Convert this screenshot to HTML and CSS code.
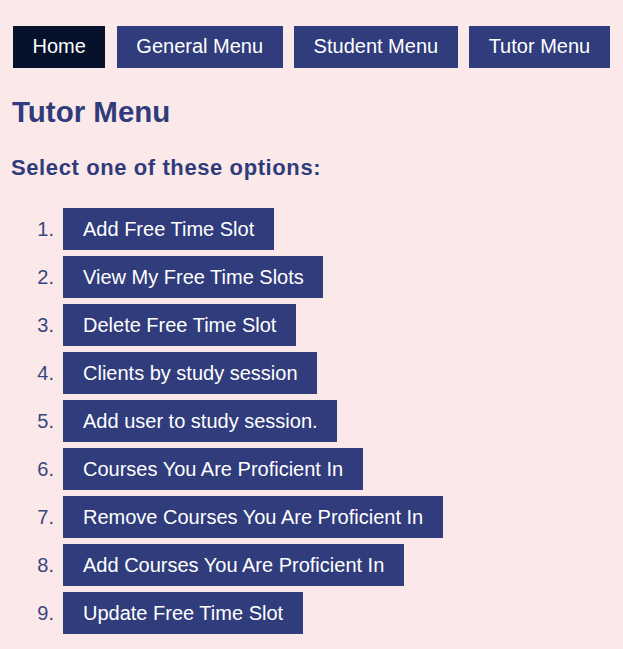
FILE: index.html
```html
<!DOCTYPE html>
<html lang="en">
<head>
<meta charset="utf-8">
<title>Tutor Menu</title>
<link rel="stylesheet" href="styles.css">
</head>
<body>
<div class="page">
  <nav class="nav">
    <a class="nav-btn nav-home" href="#">Home</a>
    <a class="nav-btn" href="#">General Menu</a>
    <a class="nav-btn" href="#">Student Menu</a>
    <a class="nav-btn" href="#">Tutor Menu</a>
  </nav>
  <h1 class="title">Tutor Menu</h1>
  <h2 class="subtitle">Select one of these options:</h2>
  <ol class="options">
    <li><a class="opt-btn" href="#">Add Free Time Slot</a></li>
    <li><a class="opt-btn" href="#">View My Free Time Slots</a></li>
    <li><a class="opt-btn" href="#">Delete Free Time Slot</a></li>
    <li><a class="opt-btn" href="#">Clients by study session</a></li>
    <li><a class="opt-btn" href="#">Add user to study session.</a></li>
    <li><a class="opt-btn" href="#">Courses You Are Proficient In</a></li>
    <li><a class="opt-btn" href="#">Remove Courses You Are Proficient In</a></li>
    <li><a class="opt-btn" href="#">Add Courses You Are Proficient In</a></li>
    <li><a class="opt-btn" href="#">Update Free Time Slot</a></li>
  </ol>
</div>
</body>
</html>
```
FILE: styles.css
```css
html, body {
  margin: 0;
  padding: 0;
  background: #fbe9ea;
}
body {
  font-family: "Liberation Sans", Arial, sans-serif;
  color: #2f3b7b;
}
.page {
  padding: 26px 0 0 11px;
}
.nav {
  display: flex;
  gap: 11.5px;
  margin-left: 2px;
}
.nav-btn, .opt-btn {
  display: inline-block;
  height: 42px;
  box-sizing: border-box;
  font-size: 20px;
  color: #ffffff;
  background: #303c7c;
  text-decoration: none;
}
.nav-btn {
  padding: 0 19.5px 2px;
  line-height: 40px;
}
.nav-home {
  background: #06122b;
}
.title {
  margin: 27px 0 0 1px;
  font-size: 29.5px;
  line-height: 34px;
  font-weight: bold;
  color: #2f3b7b;
}
.subtitle {
  margin: 26px 0 0 0;
  font-size: 22px;
  line-height: 26px;
  letter-spacing: 0.6px;
  font-weight: bold;
  color: #2f3b7b;
}
.options {
  margin: 27px 0 0 0;
  padding: 0;
  list-style: none;
  counter-reset: opt;
  font-size: 20px;
}
.options li {
  display: flex;
  margin-bottom: 6px;
  counter-increment: opt;
}
.options li::before {
  content: counter(opt) ".";
  width: 43px;
  margin-right: 9px;
  text-align: right;
  line-height: 42px;
  color: #3a4580;
}
.opt-btn {
  padding: 0 19.5px 0 20px;
  line-height: 42px;
}
```
